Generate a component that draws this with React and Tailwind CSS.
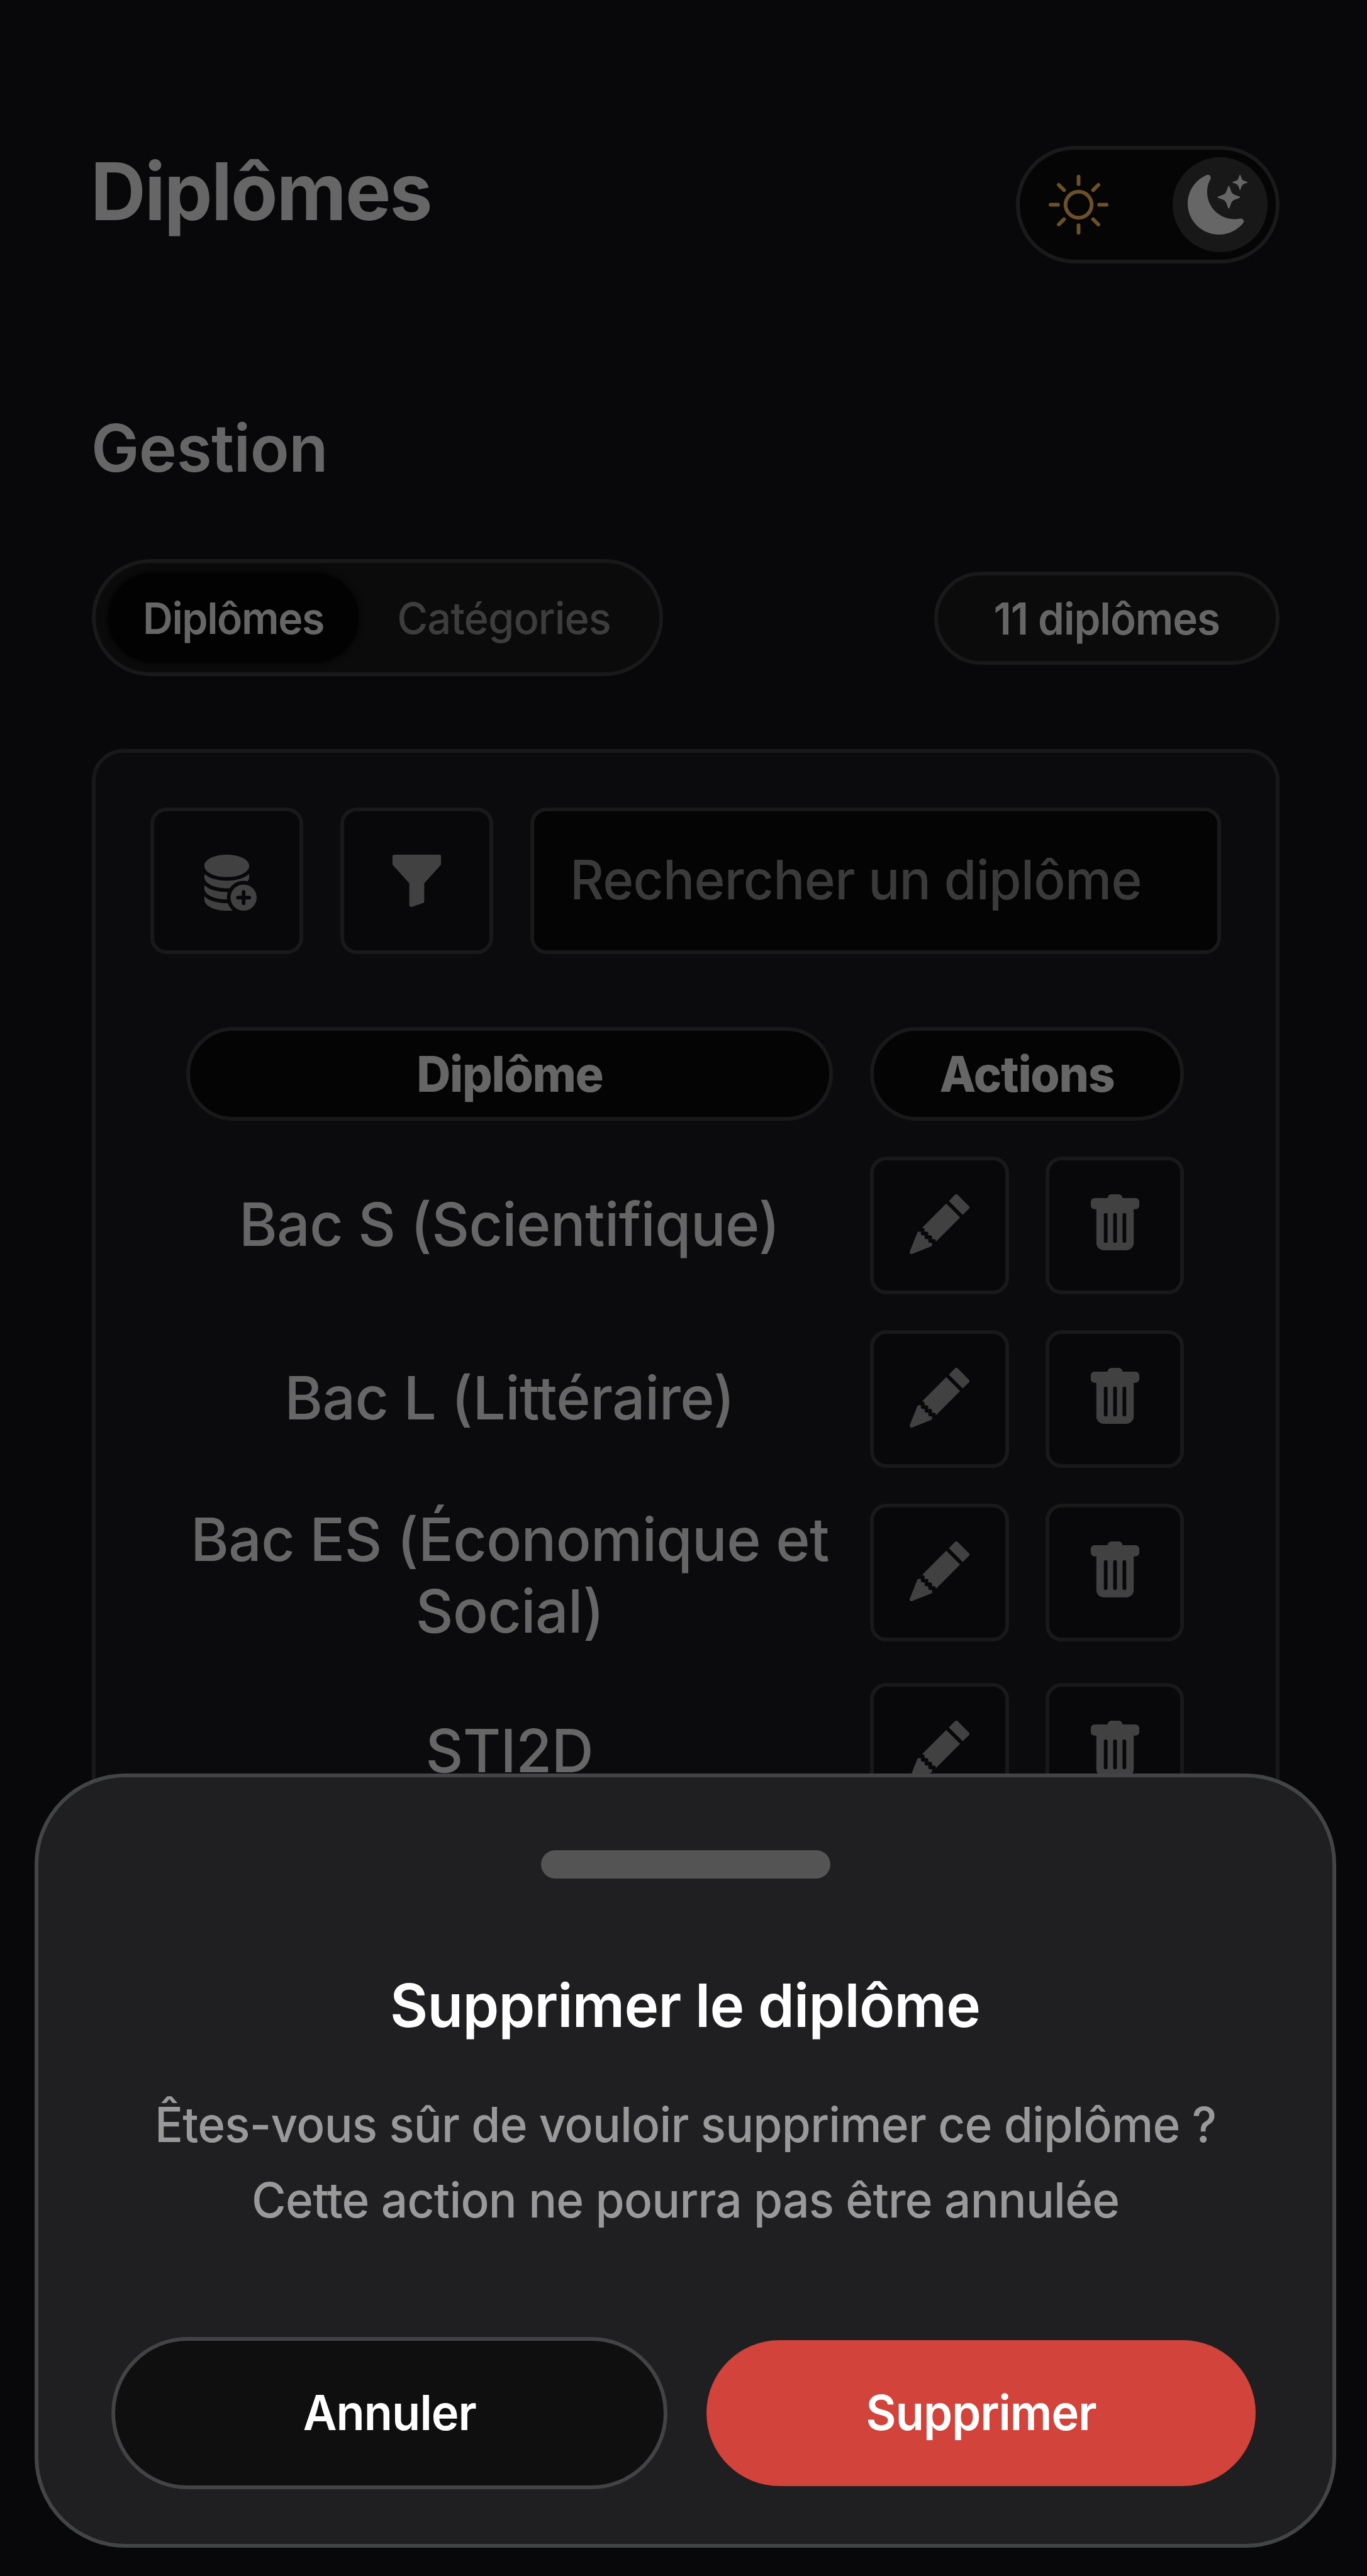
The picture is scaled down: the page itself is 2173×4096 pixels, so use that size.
import {
  BsSun,
  BsMoonStarsFill,
  BsDatabaseFillAdd,
  BsFunnelFill,
  BsPencilFill,
  BsTrashFill,
} from "react-icons/bs";

const rows = [
  ["Bac S (Scientifique)"],
  ["Bac L (Littéraire)"],
  ["Bac ES (Économique et", "Social)"],
  ["STI2D"],
];

function Toggle() {
  return (
    <div className="flex h-[187px] w-[419px] items-center justify-between rounded-full border-[6px] border-[#1a1a1b] bg-[#050505] pr-[13px] pl-[46px]">
      <BsSun className="size-[95px] text-[#6b5029]" />
      <div className="flex size-[151px] items-center justify-center rounded-full bg-[#181818] pr-[9px]">
        <BsMoonStarsFill className="size-[95px] text-[#666666]" />
      </div>
    </div>
  );
}

function IconButton({ icon: Icon, className }) {
  return (
    <button className={"flex shrink-0 items-center justify-center rounded-[26px] border-[6px] border-[#19191a] bg-[#08080a] text-[#414141] " + className}>
      <Icon className="size-[95px]" />
    </button>
  );
}

function HeadPill({ children, className }) {
  return (
    <div className={"flex h-[149px] items-center justify-center rounded-full border-[6px] border-[#19191a] bg-[#040404] text-[78px] font-extrabold tracking-[-1.3px] " + className}>
      <span className="inline-block scale-x-[0.96]">{children}</span>
    </div>
  );
}

function Row({ lines }) {
  const single = lines.length === 1;
  return (
    <div className="flex items-start gap-[59px]">
      <div
        className={
          "flex w-[1028px] flex-col items-center justify-center text-[95px] leading-[114px] font-[450] tracking-[-0.6px] whitespace-nowrap " +
          (single ? "h-[219px] pb-[4px]" : "")
        }
      >
        {lines.map((line) => (
          <span key={line} className="inline-block scale-x-[0.975]">{line}</span>
        ))}
      </div>
      <div className="flex gap-[58px]">
        <IconButton icon={BsPencilFill} className="h-[219px] w-[221px] pb-[4px]" />
        <IconButton icon={BsTrashFill} className="h-[219px] w-[220px] pb-[4px]" />
      </div>
    </div>
  );
}

function Sheet() {
  return (
    <div className="absolute top-[2820px] left-[55px] flex h-[1231px] w-[2069px] flex-col items-center rounded-[144px] border-[6px] border-[#434446] bg-[#1f1f21] px-[116px] pt-[116px]">
      <div className="h-[45px] w-[460px] rounded-full bg-[#545454]" />
      <h3 className="mt-[142px] scale-x-[0.975] text-[95px] leading-[120px] font-semibold tracking-[-0.8px] text-white">Supprimer le diplôme</h3>
      <div className="mt-[69px] flex scale-x-[0.97] flex-col items-center text-[77px] leading-[120px] font-[450] tracking-[-0.8px] whitespace-nowrap text-[#99999a]">
        <p>Êtes-vous sûr de vouloir supprimer ce diplôme ?</p>
        <p>Cette action ne pourra pas être annulée</p>
      </div>
      <div className="mt-[158px] flex w-full shrink-0 items-center justify-between text-[77px] font-semibold tracking-[-1px] text-white">
        <button className="h-[242px] w-[884px] rounded-full border-[6px] border-[#434345] bg-[#0f0f0f]">
          <span className="inline-block scale-x-[0.96]">Annuler</span>
        </button>
        <button className="mr-[6px] h-[232px] w-[873px] rounded-full bg-[#d1433b]">
          <span className="inline-block scale-x-[0.96]">Supprimer</span>
        </button>
      </div>
    </div>
  );
}

export default function App() {
  return (
    <div className="relative h-[4096px] w-[2173px] overflow-hidden bg-[#08080a] font-[Inter,sans-serif] text-[#666666]">
      <div className="flex w-[2034px] flex-col pt-[232px] pl-[146px]">
        <header className="flex items-start justify-between">
          <h1 className="-ml-[2px] origin-left scale-x-[0.965] text-[126px] leading-[144px] font-bold tracking-[-1.9px]">Diplômes</h1>
          <Toggle />
        </header>
        <h2 className="mt-[230px] -ml-[1px] origin-left scale-x-[0.98] text-[104px] leading-[126px] font-semibold tracking-[-0.5px]">Gestion</h2>
        <div className="mt-[114px] flex items-center justify-between">
          <div className="flex h-[186px] w-[908px] items-center rounded-full border-[6px] border-[#19191a] bg-[#0b0b0b] px-[20px] text-[69px]">
            <div className="flex h-[142px] w-[398px] items-center justify-center rounded-full bg-[#020202] pt-[4px] font-semibold tracking-[-1.5px] shadow-[0_0_12px_#020202]">
              <span className="inline-block scale-x-[0.96]">Diplômes</span>
            </div>
            <div className="flex flex-1 items-center justify-center pt-[4px] pl-[4px] font-medium tracking-[-1px] text-[#3d3d3d]">
              <span className="inline-block scale-x-[0.97]">Catégories</span>
            </div>
          </div>
          <div className="mt-[2px] flex h-[148px] w-[549px] items-center justify-center rounded-full border-[6px] border-[#19191a] bg-[#0b0b0b] text-[70px] font-semibold tracking-[-1.1px]">
            <span className="inline-block scale-x-[0.96]">11 diplômes</span>
          </div>
        </div>
        <section className="mt-[116px] h-[2400px] rounded-[50px] border-[6px] border-[#18181a] bg-[#0b0b0d] px-[87px] pt-[87px]">
          <div className="flex gap-[59px]">
            <IconButton icon={BsDatabaseFillAdd} className="h-[233px] w-[243px]" />
            <IconButton icon={BsFunnelFill} className="h-[233px] w-[243px]" />
            <div className="flex h-[233px] flex-1 items-center rounded-[26px] border-[6px] border-[#19191a] bg-[#040404] pb-[3px] pl-[57px] text-[86px] font-[450] tracking-[-0.7px] whitespace-nowrap text-[#3a3a3a]">
              <span className="inline-block origin-left scale-x-[0.97]">Rechercher un diplôme</span>
            </div>
          </div>
          <div className="mt-[116px] flex flex-col gap-[57px] px-[57px]">
            <div className="flex gap-[59px]">
              <HeadPill className="w-[1028px]">Diplôme</HeadPill>
              <HeadPill className="w-[499px]">Actions</HeadPill>
            </div>
            {rows.map((lines) => (
              <Row key={lines[0]} lines={lines} />
            ))}
          </div>
        </section>
      </div>
      <Sheet />
    </div>
  );
}
